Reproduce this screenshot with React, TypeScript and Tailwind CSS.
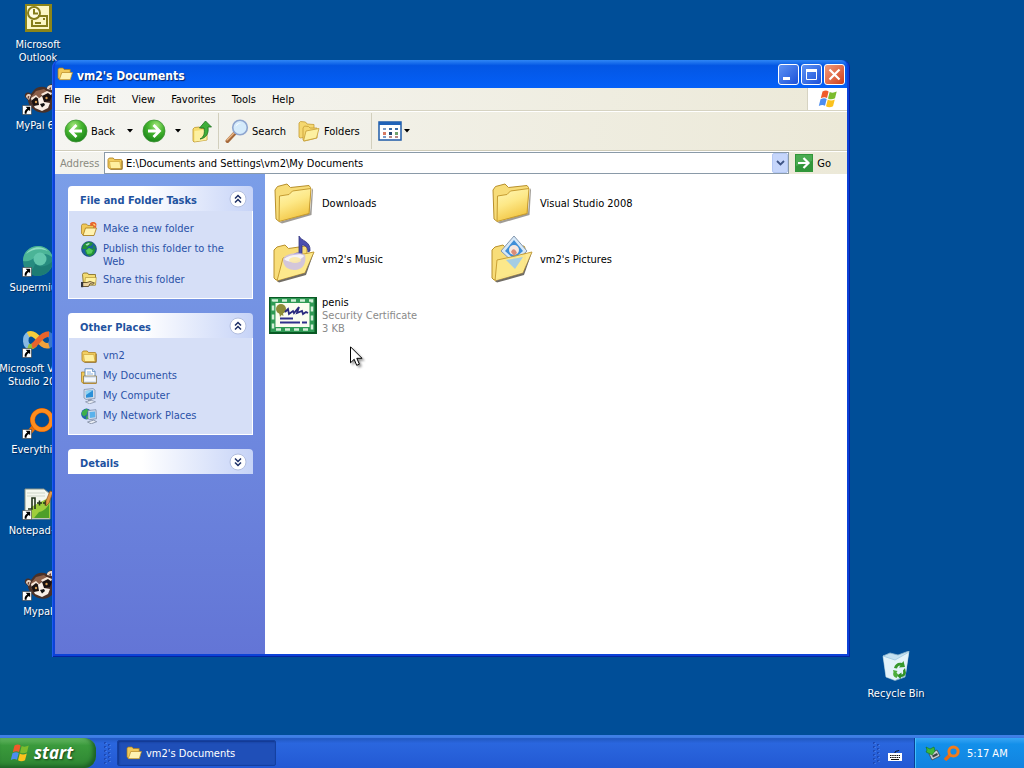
import type { ReactNode } from 'react';

type IconProps = { className?: string };

function FolderIcon({ className }: IconProps) {
  return (
    <svg viewBox="0 0 16 16" className={className} aria-hidden="true">
      <path d="M1 4.500 2.200 3h4l1.300 1.600H14a1 1 0 0 1 1 1V13a1 1 0 0 1-1 1H3L1 12.500Z" fill="#f3cf62" stroke="#a87a17" strokeWidth=".8" />
      <path d="M2.500 6.500h10.300L14 13.500H3.500Z" fill="#fff0a0" stroke="#c79a2d" strokeWidth=".6" />
      <path d="M15.200 6v8.300H3.500" fill="none" stroke="#8a651a" strokeWidth=".8" />
    </svg>
  );
}

function OpenFolderIcon({ className }: IconProps) {
  return (
    <svg viewBox="0 0 16 16" className={className} aria-hidden="true">
      <path d="M1 3.500 2 2h4l1.200 1.500h6V13.500H2.300L1 12Z" fill="#f0c95a" stroke="#a87a17" strokeWidth=".7" />
      <path d="M4.800 6.500h10.700l-2.200 7.200H2.300Z" fill="#fff3b2" stroke="#b98a24" strokeWidth=".7" />
    </svg>
  );
}

function NewFolderIcon({ className }: IconProps) {
  return (
    <svg viewBox="0 0 16 16" className={className} aria-hidden="true">
      <path d="M.5 4.500 1.500 3h4l1.200 1.500h6V14H2L.5 12.500Z" fill="#f0c95a" stroke="#a87a17" strokeWidth=".7" />
      <path d="M4.500 7h11l-2.500 7.500H2Z" fill="#fff3b2" stroke="#a87a17" strokeWidth=".8" />
      <path d="M9 2.500c2-2 5-2 6.500.5L15 7l-2-.5-1-2-2.500.5Z" fill="#e8642c" />
      <path d="m11.500 2.500 2.500.5.5 2-1.500-.5Z" fill="#ffcf7a" />
    </svg>
  );
}

function GlobeIcon({ className }: IconProps) {
  return (
    <svg viewBox="0 0 16 16" className={className} aria-hidden="true">
      <circle cx="8" cy="8" r="7.500" fill="#1b5f9e" stroke="#14406e" strokeWidth=".6" />
      <path d="M2.500 3.500C5 .500 9 .300 12 2l-1.500 2.500L7 5.500 5.500 8 1 8ZM4 9l4-2 6.500 1-1.500 5-4 2.500L5 13ZM12 3.500l3 3.500-2.500.5Z" fill="#239137" />
      <path d="m4.500 3.500 3-1.500 1.500.8-3 2Z" fill="#a9e3c4" />
      <path d="m5 9.500 3-2.500 4 2.500-1.500 3-4 .5Z" fill="#56cc59" />
    </svg>
  );
}

function ShareIcon({ className }: IconProps) {
  return (
    <svg viewBox="0 0 16 16" className={className} aria-hidden="true">
      <path d="M1.500 2.500 2.500 1h4l1 1.500h7V13h-12Z" fill="#f3dc74" stroke="#7c6518" strokeWidth=".8" />
      <path d="M4.500 5.500h10.800L14.500 13H3.500Z" fill="#fff2a0" stroke="#a88a2c" strokeWidth=".6" />
      <path d="M1 10.500h5l3-1 4.500 1.500-1.500 1.200-3-.5L7.500 14.500H1Z" fill="#ead3a0" stroke="#4d3a14" strokeWidth=".8" />
      <path d="M0 10h2.200v5.200H0Z" fill="#33363f" />
    </svg>
  );
}

function DocumentsIcon({ className }: IconProps) {
  return (
    <svg viewBox="0 0 16 16" className={className} aria-hidden="true">
      <path d="M.5 4h4v11h-3L.5 13.500Z" fill="#f0c95a" stroke="#a87a17" strokeWidth=".7" />
      <path d="M4 .8h7.500L14 3.500V12H4Z" fill="#fff" stroke="#5683b8" strokeWidth=".9" />
      <path d="M11.500.8v2.700H14" fill="#cfe1f7" stroke="#5683b8" strokeWidth=".7" />
      <path d="M6 4h4M6 6h6" stroke="#7aa6de" strokeWidth=".9" />
      <path d="M2.500 8h13v7h-13Z" fill="#d9e4f3" stroke="#8a7a4d" strokeWidth=".8" />
      <path d="M3.500 10h11v3h-11Z" fill="#f5f8fc" />
      <path d="M2 15.300h13.500" stroke="#b3831b" />
    </svg>
  );
}

function ComputerIcon({ className }: IconProps) {
  return (
    <svg viewBox="0 0 16 16" className={className} aria-hidden="true">
      <path d="m3 1.500 9-1 2 1.500v8.500l-9 1-2-1.500Z" fill="#d2dbea" stroke="#7789a8" strokeWidth=".7" />
      <path d="m4.800 3 7.200-.8V9L5 9.800Z" fill="#2a8fd8" />
      <path d="m4.800 3 7.200-.8L5 7Z" fill="#8fd4f5" />
      <path d="m7 11.500 3.500-.4.500 2H7Z" fill="#8794a8" />
      <path d="m4.500 13.800 6-1.500 4 1.500-6 2Z" fill="#e8ecf4" stroke="#7c88a0" strokeWidth=".7" />
    </svg>
  );
}

function NetworkIcon({ className }: IconProps) {
  return (
    <svg viewBox="0 0 16 16" className={className} aria-hidden="true">
      <circle cx="5.500" cy="6" r="5.400" fill="#2464ad" />
      <path d="M1.500 3 5.500.8l2.500 2-2 1.500v2L3 8.500.5 6ZM5.500 7.500l3 .5-1.500 3H5Z" fill="#3db04b" />
      <path d="m7 2.500 8-.8.5 9-7 1L7 10.500Z" fill="#d2dbea" stroke="#6d7ea0" strokeWidth=".7" />
      <path d="m8.500 4 5.500-.5.300 5.800-5.500.6Z" fill="#5ab2ec" />
      <path d="m6.500 14 6-1.800 3.200 1.500-5.500 2.100Z" fill="#edf0f6" stroke="#6c7890" strokeWidth=".7" />
    </svg>
  );
}

/* 48px shell icons */
function BigFolder() {
  return (
    <svg viewBox="0 0 48 48" className="h-12 w-12" aria-hidden="true">
      <defs>
        <linearGradient id="folderFace" x1="0" y1="0" x2=".4" y2="1">
          <stop offset="0" stopColor="#fff7b8" />
          <stop offset=".5" stopColor="#fde887" />
          <stop offset="1" stopColor="#f2c644" />
        </linearGradient>
      </defs>
      <path d="M10 43 41 34l2-25 1 2-1.500 25L13 44.500Z" fill="#77726a" opacity=".7" />
      <path d="M6 11 8.500 7.500 18 5l3.500 3.500L40 6.500l1.500 2L40 34.500 9.500 42 7 40Z" fill="#f7dc78" stroke="#b8902c" />
      <path d="M10.500 17 20 15.500l3.500-3.500L42 9.500l-2 25L10 42.500Z" fill="url(#folderFace)" stroke="#c69c31" />
    </svg>
  );
}

function OpenBase({ children }: { children: ReactNode }) {
  return (
    <svg viewBox="0 0 48 48" className="h-12 w-12" aria-hidden="true">
      <path d="M5 15 8 12l8-2 3.500 3.500L37 11l1 2v22L7 45l-2-2Z" fill="#f8dd79" stroke="#b8902c" />
      {children}
    </svg>
  );
}

function MusicFolder() {
  return (
    <OpenBase>
      <path d="M30 1c2 5 12 5 11 15l-2 1c0-5-3-7-6-7v13h-3Z" fill="#4c4fae" stroke="#32357f" strokeWidth=".8" />
      <ellipse cx="29" cy="21" rx="5" ry="3.500" fill="#5d5fbd" />
      <path d="m14 23 31-6-9 21-28 8Z" fill="#fde98c" stroke="#c69c31" />
      <path d="M14 24c2-6 18-8 22-4 2 9-3 15-10 15-8 0-12-4-12-11Z" fill="#cbbfe8" opacity=".85" />
      <path d="M15 24c3-3 17-7 20-3-4 5-15 8-20 3Z" fill="#fff" opacity=".8" />
      <ellipse cx="26" cy="25" rx="6" ry="3" fill="#fbe9a8" opacity=".9" />
      <path d="m8 46 28-8 9-21-8 23-27 7.500Z" fill="#716d65" />
    </OpenBase>
  );
}

function PicturesFolder() {
  return (
    <OpenBase>
      <path d="m27 1 13 15-13 12-13-12Z" fill="#d6e8f8" stroke="#8497ad" />
      <path d="m27 5 9 11-9 8-9-8Z" fill="#3f8fd8" />
      <circle cx="27" cy="15" r="5" fill="#f6e8e0" />
      <path d="M24 17c1-3 3-4 5-1l1 2-3 3Z" fill="#d98c78" />
      <path d="m10 25 14-3 21-5-9 21-28 8Z" fill="#fde98c" stroke="#c69c31" opacity=".93" />
      <path d="m19 25 17-3-8 12Z" fill="#a4cde4" />
      <path d="m8 46 28-8 9-21-8 23-27 7.500Z" fill="#716d65" />
    </OpenBase>
  );
}

function CertificateIcon() {
  return (
    <svg viewBox="0 0 48 48" className="h-12 w-12" aria-hidden="true">
      <path d="M0 6h48v37H0Z" fill="#0a5a25" />
      <path d="M1.500 7h44v34h-44Z" fill="#2f9a55" />
      <path d="M4 9.500h39v29H4Z" fill="none" stroke="#d3efd8" strokeWidth="2.500" strokeDasharray="5 4" />
      <path d="M6.500 12h34v24h-34Z" fill="#fbfdf0" />
      <circle cx="12" cy="18" r="5" fill="#8d8c38" />
      <path d="m10 21 1 5 1.500-2 2 1-1-5Z" fill="#8d8c38" />
      <path d="m16 21 3-3 1 5 4-3 1 2 5-6-2 6 5-2 1 3 3-2 2 1" fill="none" stroke="#29297e" strokeWidth="1.800" />
      <path d="M11 27.500h13M11 31.500h20M33 31.500h5" stroke="#30308c" strokeWidth="1.800" />
    </svg>
  );
}

function WindowsFlag({ className }: IconProps) {
  return (
    <svg viewBox="0 0 20 20" className={className} aria-hidden="true">
      <path d="M4.500 2.500C7 1 9 1.200 10.600 2.400L9 9C7.300 7.900 5.300 7.800 2.800 9.200Z" fill="#f05a2a" />
      <path d="M11.700 3C13.800 4 16 3.900 18.700 2.600L17 9.200c-2.500 1.300-4.900 1.500-7 .2Z" fill="#7cbc2d" />
      <path d="M2.500 10.300C5 9 7 9 8.700 10.100L7 16.800C5.200 15.700 3.300 15.700.8 17Z" fill="#4c8df0" />
      <path d="M9.800 10.600c2.200 1.300 4.500 1.200 7 0L15 17.300c-2.500 1.200-4.900 1.200-7 0Z" fill="#fbc21d" />
    </svg>
  );
}

function RoundArrow({ flip = false }: { flip?: boolean }) {
  return (
    <svg viewBox="0 0 24 24" className={flip ? 'h-6 w-6 -scale-x-100' : 'h-6 w-6'} aria-hidden="true">
      <defs>
        <radialGradient id={flip ? 'orbF' : 'orbB'} cx=".4" cy=".25" r=".8">
          <stop offset="0" stopColor="#a4e57c" />
          <stop offset=".45" stopColor="#45b52f" />
          <stop offset="1" stopColor="#178018" />
        </radialGradient>
      </defs>
      <circle cx="12" cy="12" r="11" fill={flip ? 'url(#orbF)' : 'url(#orbB)'} stroke="#3f9335" strokeWidth=".8" />
      <path d="m12.500 6-6 6 6 6M7 12h11" fill="none" stroke="#fff" strokeWidth="2.800" />
    </svg>
  );
}

function UpFolderIcon() {
  return (
    <svg viewBox="0 0 24 24" className="h-6 w-6" aria-hidden="true">
      <path d="m3 10 1.500-1.500 5-.5 1.500 1.500h6V21L4 23l-1-1Z" fill="#f7dc6c" stroke="#bd962c" strokeWidth=".8" />
      <path d="m4.500 12 12-1.500V21l-12 1.500Z" fill="#fdf0a0" />
      <path d="M10 20c4-2 5-6 4-11h-4.500L15.500 2l6 6h-3.500c1 7-2 11-8 12Z" fill="#3fae3a" stroke="#1d6f1d" strokeWidth=".8" />
    </svg>
  );
}

function SearchIcon() {
  return (
    <svg viewBox="0 0 24 24" className="h-6 w-6" aria-hidden="true">
      <path d="m9.500 14.500-7 7.500" stroke="#a5683a" strokeWidth="4" strokeLinecap="round" />
      <path d="m9 14-7 7" stroke="#e9b889" strokeWidth="1.500" strokeLinecap="round" />
      <circle cx="15" cy="8.500" r="7.300" fill="#d5ebfb" stroke="#8fa6cf" strokeWidth="1.600" />
      <path d="M10.500 8c.5-3 3-4.500 6-4-3 .5-4.500 2-6 4Z" fill="#fff" />
    </svg>
  );
}

function FoldersIcon() {
  return (
    <svg viewBox="0 0 24 24" className="h-6 w-6" aria-hidden="true">
      <path d="m2 4 1.500-1.500 5 .5L10 5l7 .5V17L3 19l-1-1Z" fill="#f5d870" stroke="#c59d34" strokeWidth=".8" />
      <path d="m6 9 1.500-2 4 .5L13 9h7v10L7.500 22 6 21Z" fill="#f5d870" stroke="#c59d34" strokeWidth=".8" />
      <path d="m9 12 13-2.500-2.500 9.500L6.500 22Z" fill="#fdf0a0" stroke="#c59d34" strokeWidth=".8" />
    </svg>
  );
}

function ViewsIcon() {
  return (
    <svg viewBox="0 0 24 20" className="h-5 w-6" aria-hidden="true">
      <path d="M1 1h22v18H1Z" fill="#fff" stroke="#1f5ba8" strokeWidth="1.500" />
      <path d="M1 1h22v3H1Z" fill="#1f62b8" />
      <path d="M5 7h3v2H5ZM5 15h3v2H5Z" fill="#7a9cc6" />
      <path d="M11 7h3v2h-3ZM17 7h3v2h-3Z" fill="#3b6da8" />
      <path d="M5 11h3v3H5Z" fill="#d77a62" />
      <path d="M11 11h3v3h-3Z" fill="#21476f" />
      <path d="M17 11h3v3h-3Z" fill="#6ea36c" />
      <path d="M11 15h3v2h-3ZM17 15h3v2h-3Z" fill="#b58a86" />
    </svg>
  );
}

function Caret() {
  return (
    <svg viewBox="0 0 6 4" className="h-1 w-1.5" aria-hidden="true">
      <path d="M0 0h6L3 3.500Z" fill="#000" />
    </svg>
  );
}

/* Desktop shortcuts */
function OutlookIcon() {
  return (
    <svg viewBox="0 0 32 32" className="h-8 w-8" aria-hidden="true">
      <path d="M3 2h27v28H3Z" fill="#8c8519" />
      <path d="M5 4h22v23H5Z" fill="#fbf7c4" />
      <circle cx="12" cy="11" r="6" fill="#fffde0" stroke="#857e1b" strokeWidth="2" />
      <path d="M12 7v4.500h4M16 14h9v10H10v-6" fill="none" stroke="#857e1b" strokeWidth="2" />
      <path d="M13 21h6M21 17h2" stroke="#857e1b" strokeWidth="2" />
    </svg>
  );
}

function RaccoonIcon() {
  return (
    <svg viewBox="0 0 32 32" className="h-8 w-8" aria-hidden="true">
      <path d="M3 14c-1-4 3-6 6-3l3-4c4-4 9-4 13-2 1-3 3-4 6-4v24c-4 5-11 6-17 3-5-3-8-7-8-11Z" fill="#4a3128" />
      <path d="M4 14c0-3 3-4 5-2l-2 5ZM25 6c0-3 2-4 5-4v5Z" fill="#e8d5c6" />
      <path d="M5.500 14.500c0-1.500 1-2 2-1l-1 2.500ZM27 5.500l2-1.500v3Z" fill="#6e4436" />
      <path d="m9 14 5-6 8-2 4 3-6 3-4 5-5 1Z" fill="#8b5f49" />
      <path d="m9 15 5-3 4 4-3 3-5 1ZM19 11l6-3 5 2-2 4-6 1Z" fill="#f6e6d8" />
      <path d="m9 18 5-4 4 3-1 5-5 1ZM20 13l6-3 4 3-2 5-6 1Z" fill="#191110" />
      <path d="m16 16 4-3 2 6 6 1-2 5-6 3-7-3-1-2 5-1Z" fill="#f9efe6" />
      <circle cx="14" cy="19" r="1.200" fill="#d49a50" />
      <circle cx="24.500" cy="15" r="1.200" fill="#d49a50" />
      <path d="m18 21 4-1 1 2-3 2.500Z" fill="#111" />
    </svg>
  );
}

function SupermiumIcon() {
  return (
    <svg viewBox="0 0 32 32" className="h-8 w-8" aria-hidden="true">
      <circle cx="16" cy="16" r="15" fill="#278c80" />
      <path d="M1 16C1 6 9 0 18 1c7 1 12 6 13 12-5-5-12-5-18-1-4 4-8 5-12 4Z" fill="#4bb497" />
      <path d="M4 9C9 1 20 0 26 6 18 3 10 4 4 9Z" fill="#8fdcc2" />
      <circle cx="18" cy="14" r="6.500" fill="#62c6ac" />
      <path d="M13 19c5 4 12 3 18-3-1 9-8 15-16 15-4 0-7-2-9-4 4-1 6-4 7-8Z" fill="#1d7c74" />
    </svg>
  );
}

function VisualStudioIcon() {
  return (
    <svg viewBox="0 0 32 32" className="h-8 w-8" fill="none" strokeWidth="5.500" aria-hidden="true">
      <path d="M26 20c5-2 5-10 0-12" stroke="#3b78c8" />
      <path d="M8 21c-5-1-6-10-1-13" stroke="#86b9e4" />
      <path d="M6 8.500c4-2 8 1 11 5" stroke="#f4cd3c" />
      <path d="M6 20.500c3 1 5 0 7-2" stroke="#8fbf3b" />
      <path d="M16 13c3 4 6 8 11 6.500" stroke="#f0a23c" />
      <path d="M10 20c5-1 8-12 17-12" stroke="#e8642c" />
    </svg>
  );
}

function EverythingIcon() {
  return (
    <svg viewBox="0 0 32 32" className="h-8 w-8" aria-hidden="true">
      <path d="m12 20-7 8" stroke="#e86c08" strokeWidth="5" />
      <circle cx="20" cy="13" r="9.500" fill="none" stroke="#c95404" strokeWidth="5" />
      <circle cx="20" cy="13" r="9.500" fill="none" stroke="#ff8c1c" strokeWidth="4" />
    </svg>
  );
}

function NotepadIcon() {
  return (
    <svg viewBox="0 0 32 32" className="h-8 w-8" aria-hidden="true">
      <path d="M3 1h19l6 5v25H3Z" fill="#f4f8ef" stroke="#8a9385" />
      <path d="M9 19 28 9v21H9Z" fill="#9fce3c" />
      <path d="M17 24c5-1 8-4 10-8v14H12Z" fill="#4e9f29" />
      <path d="M5 5h18M5 8h18" stroke="#cdd5c8" />
      <path d="M6 21h4V10h3v11M15 15h5M17.500 12.500v5M21 15h5M23.500 12.500v5" fill="none" stroke="#23351c" strokeWidth="1.600" />
      <path d="m24 13 4-10 3 1-4 11-3 3Z" fill="#e09a48" stroke="#8f5520" strokeWidth=".7" />
    </svg>
  );
}

function RecycleBinIcon() {
  return (
    <svg viewBox="0 0 32 32" className="h-8 w-8" aria-hidden="true">
      <path d="m3 5 7-3 8 2 11-4-4 26-10 3.500-9-3.500Z" fill="#c4e1f1" stroke="#8cb5cd" strokeWidth=".8" />
      <path d="m3 5 12 4L29 1l-3 21-11 7-9-3Z" fill="#eef8fc" opacity=".75" />
      <path d="m3 5 12 4L29 1" fill="none" stroke="#a8cfe4" />
      <path d="M14 17c1-4 4-6 8-5l1.500-2 1.500 6-6 .5 1.500-2c-2 0-3 1-3.500 3Z" fill="#37992c" />
      <path d="m25 17 1 5c-1 3-3 4-5 4l-.5 2-3.500-3.500 4.500-3v2c1.500 0 2-1 1.500-4Z" fill="#2f8f27" />
      <path d="m13 19 4.500 1-1 1.500 2 2.500-2 3c-3-1-4-3-3-6Z" fill="#4cad3c" />
    </svg>
  );
}

function ShortcutArrow() {
  return (
    <svg viewBox="0 0 11 11" className="absolute bottom-0 left-0 h-2.5 w-2.5" aria-hidden="true">
      <path d="M.5.5h10v10H.5Z" fill="#fff" stroke="#222" strokeWidth=".6" />
      <path d="M4 2h5v5L7.500 5.500C5.500 6.500 5 8 5 9.500H3C2.500 7 3.500 5 5.800 3.800Z" fill="#000" />
    </svg>
  );
}

const shortcuts = [
  { label: ['Microsoft', 'Outlook'], icon: <OutlookIcon />, arrow: false, row: 'row-start-1' },
  { label: ['MyPal 68'], icon: <RaccoonIcon />, arrow: true, row: 'row-start-2' },
  { label: ['Supermium'], icon: <SupermiumIcon />, arrow: true, row: 'row-start-4' },
  { label: ['Microsoft Visual', 'Studio 2008'], icon: <VisualStudioIcon />, arrow: true, row: 'row-start-5' },
  { label: ['Everything'], icon: <EverythingIcon />, arrow: true, row: 'row-start-6' },
  { label: ['Notepad++'], icon: <NotepadIcon />, arrow: true, row: 'row-start-7' },
  { label: ['Mypal'], icon: <RaccoonIcon />, arrow: true, row: 'row-start-8' },
];

const menus = ['File', 'Edit', 'View', 'Favorites', 'Tools', 'Help'];

const tasks = [
  { label: 'Make a new folder', icon: NewFolderIcon },
  { label: 'Publish this folder to the Web', icon: GlobeIcon },
  { label: 'Share this folder', icon: ShareIcon },
];

const places = [
  { label: 'vm2', icon: FolderIcon },
  { label: 'My Documents', icon: DocumentsIcon },
  { label: 'My Computer', icon: ComputerIcon },
  { label: 'My Network Places', icon: NetworkIcon },
];

const files = [
  { name: 'Downloads', icon: <BigFolder /> },
  { name: 'Visual Studio 2008', icon: <BigFolder /> },
  { name: "vm2's Music", icon: <MusicFolder /> },
  { name: "vm2's Pictures", icon: <PicturesFolder /> },
  { name: 'penis', icon: <CertificateIcon />, details: ['Security Certificate', '3 KB'] },
];

type PanelProps = {
  title: string;
  items?: { label: string; icon: (props: IconProps) => ReactNode }[];
};

function TaskPanel({ title, items }: PanelProps) {
  return (
    <section>
      <button className="flex h-[25px] w-full items-center justify-between rounded-t-sm bg-linear-to-r from-white from-40% to-[#c6d3f7] pr-1.5 pl-3 text-left text-[11px] font-bold text-[#1f539f]">
        <span className="pt-1">{title}</span>
        <svg viewBox="0 0 18 18" className="h-[18px] w-[18px]" aria-hidden="true">
          <circle cx="9" cy="9" r="8" fill="#fff" stroke="#b3bfdf" />
          <path
            d={items ? 'm6 8.500 3-3 3 3M6 12.500l3-3 3 3' : 'm6 5.500 3 3 3-3M6 9.500l3 3 3-3'}
            fill="none"
            stroke="#1d2f66"
            strokeWidth="1.500"
          />
        </svg>
      </button>
      {items && (
        <ul className="flex flex-col gap-1 border border-t-0 border-white bg-[#d6dff7] px-3 py-2.5">
          {items.map((item) => (
            <li key={item.label}>
              <a href="#" className="flex items-start gap-1.5 text-[#2a52a8]">
                <item.icon className="h-4 w-4 shrink-0" />
                <span className="pt-px">{item.label}</span>
              </a>
            </li>
          ))}
        </ul>
      )}
    </section>
  );
}

function TitleBar() {
  return (
    <header className="flex h-7 shrink-0 items-center rounded-t-md bg-linear-to-b from-[#2f86f5] via-[#0356e4] via-20% to-[#0460f8] pr-0.5 pl-0.5 text-white">
      <OpenFolderIcon className="mr-1 h-4 w-4" />
      <h1 className="flex-1 pt-1 text-[12px] font-bold [text-shadow:1px_1px_1px_#0a246a]">vm2's Documents</h1>
      <div className="flex gap-0.5 pt-px">
        <button aria-label="Minimize" className="h-[21px] w-[21px] rounded-[3px] border border-white bg-linear-to-br from-[#5e92f4] to-[#1d4fd8]">
          <svg viewBox="0 0 19 19" aria-hidden="true">
            <path d="M4 12h7v3H4Z" fill="#fff" />
          </svg>
        </button>
        <button aria-label="Maximize" className="h-[21px] w-[21px] rounded-[3px] border border-white bg-linear-to-br from-[#5e92f4] to-[#1d4fd8]">
          <svg viewBox="0 0 19 19" aria-hidden="true">
            <path d="M4.500 5v9.500h10V5Z" fill="none" stroke="#fff" />
            <path d="M4 4h11v3H4Z" fill="#fff" />
          </svg>
        </button>
        <button aria-label="Close" className="h-[21px] w-[21px] rounded-[3px] border border-white bg-linear-to-br from-[#f09a7c] to-[#cf3a10]">
          <svg viewBox="0 0 19 19" aria-hidden="true">
            <path d="m4.500 4.500 10 10m0-10-10 10" stroke="#fff" strokeWidth="2.200" />
          </svg>
        </button>
      </div>
    </header>
  );
}

function Toolbar() {
  return (
    <div className="flex h-10 shrink-0 items-center border-t border-b border-t-white border-b-[#cfccb9] bg-linear-to-r from-[#f5f5f1] to-[#ece9d8] pl-[9px]">
      <button className="flex w-[54px] items-center gap-[3px]">
        <RoundArrow />
        Back
      </button>
      <button aria-label="Back history" className="flex w-6 justify-center">
        <Caret />
      </button>
      <button aria-label="Forward" className="flex">
        <RoundArrow flip />
      </button>
      <button aria-label="Forward history" className="flex w-6 justify-center">
        <Caret />
      </button>
      <button aria-label="Up" className="flex">
        <UpFolderIcon />
      </button>
      <span className="mr-1.5 ml-1 h-9 w-px bg-[#d2cfbd]" />
      <button className="flex w-[72px] items-center gap-[3px]">
        <SearchIcon />
        Search
      </button>
      <button className="flex w-[68px] items-center gap-[3px]">
        <FoldersIcon />
        Folders
      </button>
      <span className="mr-1.5 ml-1.5 h-9 w-px bg-[#d2cfbd]" />
      <button aria-label="Views" className="flex items-center gap-0.5">
        <ViewsIcon />
        <Caret />
      </button>
    </div>
  );
}

function AddressBar() {
  return (
    <form className="flex h-[23px] shrink-0 items-center border-t border-white bg-linear-to-r from-[#f3f3ee] to-[#ece9d8] pr-4 pl-[5px]">
      <label htmlFor="address" className="w-11 text-[#8a8a80]">
        Address
      </label>
      <div className="flex h-[22px] flex-1 items-center border border-[#8a9aa8] bg-white pl-0.5">
        <FolderIcon className="h-4 w-4" />
        <input
          id="address"
          type="text"
          defaultValue="E:\Documents and Settings\vm2\My Documents"
          className="min-w-0 flex-1 pl-[3px] text-black outline-none"
        />
        <button type="button" aria-label="Show addresses" className="flex h-5 w-4 items-center justify-center rounded-xs border border-[#b4c8f4] bg-[#c6d6fb]">
          <svg viewBox="0 0 9 6" className="h-1.5 w-[9px]" aria-hidden="true">
            <path d="m1 1 3.500 3.500L8 1" fill="none" stroke="#3e5485" strokeWidth="1.800" />
          </svg>
        </button>
      </div>
      <button type="button" className="ml-1.5 flex items-center gap-1">
        <svg viewBox="0 0 18 18" className="h-[18px] w-[18px]" aria-hidden="true">
          <path d="M0 0h18v18H0Z" fill="#31963a" />
          <path d="M1 1h16v6L1 12Z" fill="#5cb960" opacity=".6" />
          <path d="M3 9h10M8.500 4l5 5-5 5" fill="none" stroke="#fff" strokeWidth="2.200" />
        </svg>
        Go
      </button>
    </form>
  );
}

function ExplorerWindow() {
  return (
    <main className="absolute top-[60px] right-[174px] bottom-[111px] left-[52px] flex flex-col rounded-t-lg bg-[#0c42d8] px-[3px] pb-[3px] shadow-[inset_1px_0_0_#1c5cf0,inset_-1px_-1px_0_#0524a0]">
      <TitleBar />
      <nav className="flex h-[23px] shrink-0 items-stretch border-b border-[#d6d3c2] bg-linear-to-r from-[#f6f6f3] to-[#ece9d8]">
        <div className="flex flex-1 items-center pl-px">
          {menus.map((menu) => (
            <button key={menu} className="px-2">
              {menu}
            </button>
          ))}
        </div>
        <div className="flex w-10 items-center justify-center border-l border-[#d6d3c2] bg-white">
          <WindowsFlag className="h-5 w-5" />
        </div>
      </nav>
      <Toolbar />
      <AddressBar />
      <div className="flex min-h-0 flex-1">
        <aside className="flex w-[210px] shrink-0 flex-col gap-3.5 bg-linear-to-b from-[#7b9ee8] to-[#6375d6] p-3 pl-[13px]">
          <TaskPanel title="File and Folder Tasks" items={tasks} />
          <TaskPanel title="Other Places" items={places} />
          <TaskPanel title="Details" />
        </aside>
        <section className="relative flex-1 bg-white pt-[5px] pl-1">
          <ul className="grid grid-cols-[repeat(auto-fill,218px)] gap-y-2">
            {files.map((file) => (
              <li key={file.name} className="flex h-12 items-center gap-[5px]">
                {file.icon}
                <div>
                  <p>{file.name}</p>
                  {file.details?.map((line) => (
                    <p key={line} className="text-[#8a8a8a]">
                      {line}
                    </p>
                  ))}
                </div>
              </li>
            ))}
          </ul>
          {/* mouse pointer */}
          <svg viewBox="0 0 13 21" className="absolute top-[172px] left-[85px] h-[21px] w-[13px] drop-shadow-[2px_2px_1px_rgba(0,0,0,0.4)]" aria-hidden="true">
            <path d="M.5.8v16l3.700-3.500 2.500 6 2.700-1.100-2.600-5.900h5.200Z" fill="#fff" stroke="#000" />
          </svg>
        </section>
      </div>
    </main>
  );
}

function GripDots() {
  return (
    <svg viewBox="0 0 8 24" className="h-6 w-2" aria-hidden="true">
      <path d="M2 1v22M6 3v20" stroke="#1c49b4" strokeWidth="2" strokeDasharray="2 2" />
      <path d="M3 2v22M7 4v20" stroke="#5c93f5" strokeDasharray="1 3" />
    </svg>
  );
}

function Taskbar() {
  return (
    <footer className="absolute inset-x-0 bottom-0 flex h-[33px] items-stretch bg-linear-to-b from-[#1b4fae] via-[#2a66de] via-25% to-[#2359d4] pt-[3px] text-white shadow-[inset_0_3px_1px_#3f7fe6]">
      <button className="flex w-24 items-center gap-1 rounded-r-xl bg-linear-to-b from-[#63b662] via-[#3a9a3c] via-25% to-[#2e8532] pl-2.5 shadow-[inset_-3px_-2px_4px_#1c5f25]">
        <WindowsFlag className="h-5 w-5" />
        <span className="font-['Open_Sans',sans-serif] text-[17px] leading-5 font-bold italic [text-shadow:1px_1px_2px_#153f18]">start</span>
      </button>
      <div className="flex w-[21px] items-center justify-center">
        <GripDots />
      </div>
      <button className="mt-0.5 mb-0.5 flex w-[159px] items-center gap-1 rounded-xs border border-[#1440a0] bg-[#1f4fb8] pl-2 shadow-[inset_1px_1px_2px_#10358c]">
        <OpenFolderIcon className="h-4 w-4" />
        <span>vm2's Documents</span>
      </button>
      <div className="ml-auto flex items-center gap-2 pr-3">
        <GripDots />
        <svg viewBox="0 0 14 14" className="mt-1 h-3.5 w-3.5" aria-hidden="true">
          <path d="M0 5h14v8H0Z" fill="#fff" />
          <path d="M2 7.500h10M2 9.500h10" stroke="#111" strokeWidth="1.200" strokeDasharray="1.500 .7" />
          <path d="M3 11.500h8M7 5c0-3 3-1 4-3" fill="none" stroke="#111" />
        </svg>
      </div>
      <div className="flex w-[110px] items-center gap-[3px] border-l border-[#0a3f94] bg-linear-to-b from-[#36a5f4] via-[#1390ea] via-20% to-[#1283e0] pl-2.5 shadow-[inset_1px_0_0_#43c0fb]">
        <svg viewBox="0 0 16 16" className="h-4 w-4" aria-hidden="true">
          <path d="m4 9 8-4 3 6-8 4Z" fill="#c9ced4" stroke="#3c4146" strokeWidth=".8" />
          <path d="m7 10.500 5-2.500 1 2-5 2.500Z" fill="#3c4146" />
          <path d="m1 2 4 2 4-2 1 4-3 4-4-2-2-1 1-2Z" fill="#3db83c" stroke="#157019" strokeWidth=".6" />
        </svg>
        <svg viewBox="0 0 16 16" className="h-4 w-4" aria-hidden="true">
          <path d="m6 10-5 5" stroke="#e86a14" strokeWidth="3.500" />
          <circle cx="9.500" cy="6.500" r="4.600" fill="none" stroke="#f27c1c" strokeWidth="3" />
        </svg>
        <time className="ml-1">5:17 AM</time>
      </div>
    </footer>
  );
}

export default function App() {
  return (
    <div className="relative h-screen overflow-hidden bg-[#004e98] font-['DejaVu_Sans_Condensed','DejaVu_Sans',sans-serif] text-[11px] leading-[13px] whitespace-nowrap text-black [&_aside]:whitespace-normal">
      <div className="grid w-[76px] auto-rows-[81px] grid-cols-1 text-center text-white [text-shadow:1px_1px_1px_#00285a]">
        {shortcuts.map((item) => (
          <div key={item.label[0]} className={`flex flex-col items-center gap-1 pt-0.5 ${item.row}`}>
            <span className="relative">
              {item.icon}
              {item.arrow && <ShortcutArrow />}
            </span>
            <span>
              {item.label.map((line) => (
                <span key={line} className="block">
                  {line}
                </span>
              ))}
            </span>
          </div>
        ))}
      </div>
      <div className="absolute right-[90px] bottom-[68px] flex w-[76px] flex-col items-center gap-1 text-white [text-shadow:1px_1px_1px_#00285a]">
        <RecycleBinIcon />
        <span>Recycle Bin</span>
      </div>
      <ExplorerWindow />
      <Taskbar />
    </div>
  );
}
